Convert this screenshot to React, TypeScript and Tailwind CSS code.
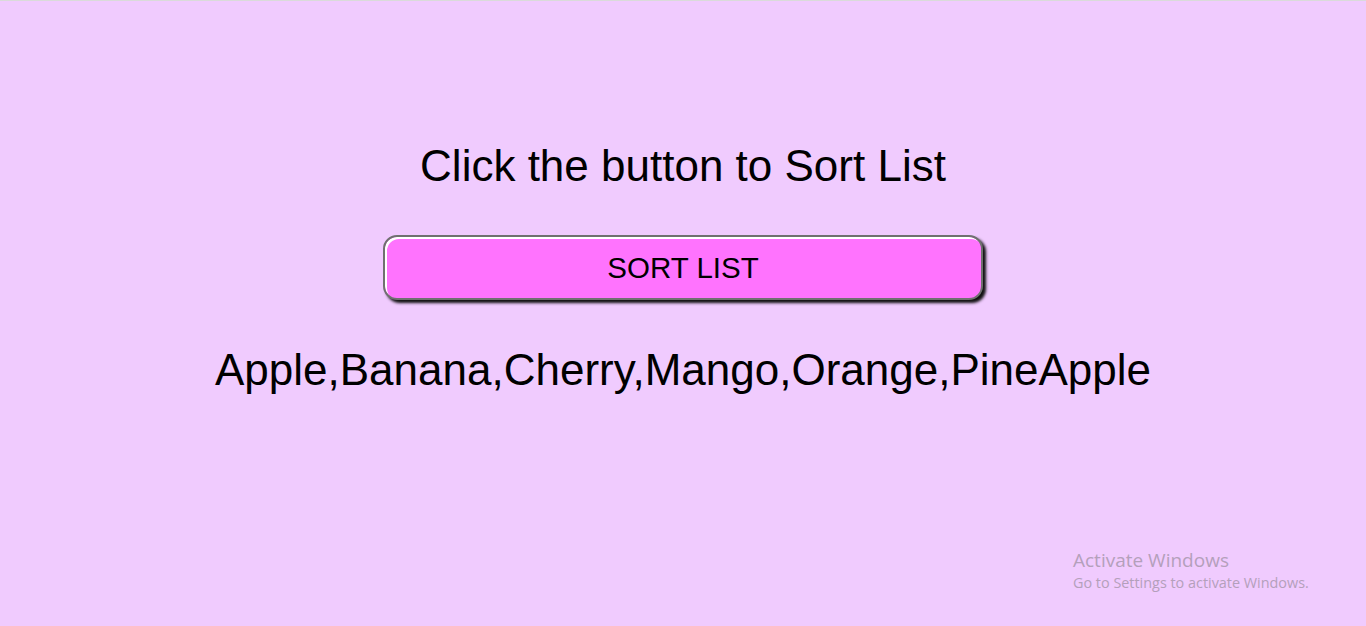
import { useState } from "react";

const FRUITS = ["PineApple", "Banana", "Cherry", "Apple", "Orange", "Mango"];

export default function App() {
  const [list, setList] = useState<string[]>([...FRUITS].sort());

  return (
    <div className="relative min-h-[626px] w-full border-t border-[#dadada] bg-[#f0cbfe] font-['Liberation_Sans',Arial,sans-serif] text-black">
      <div className="flex flex-col items-center pt-[140px]">
        <h1 className="text-[44px] leading-[49px]">Click the button to Sort List</h1>

        <button
          onClick={() => setList([...list].sort())}
          className="mt-[45px] h-[65px] w-[600px] rounded-[14px] border-2 border-[#707070] bg-[#ff73fe] text-[29.5px] leading-none shadow-[inset_2px_2px_0_#ffffff,3px_3px_3px_#111111]"
        >
          SORT LIST
        </button>

        <p className="mt-[45px] text-[44px] leading-[49px]">{list.join(",")}</p>
      </div>

      <div className="absolute left-[1073px] top-[547px] font-['Open_Sans','Noto_Sans',sans-serif] text-[#b4a0bb]">
        <div className="text-[19px] leading-[25px]">Activate Windows</div>
        <div className="text-[14.4px] leading-[19px]">Go to Settings to activate Windows.</div>
      </div>
    </div>
  );
}
